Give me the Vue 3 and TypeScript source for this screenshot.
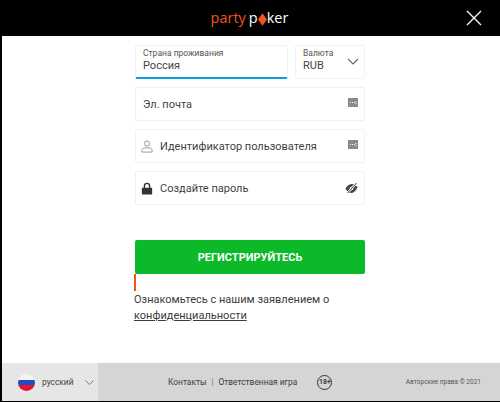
<script setup lang="ts">
const fields = [
  { label: 'Эл. почта', icon: '', end: 'dots' },
  { label: 'Идентификатор пользователя', icon: 'user', end: 'dots' },
  { label: 'Создайте пароль', icon: 'lock', end: 'eye' }
]
</script>

<template>
  <div class="frame">
    <header class="top">
      <div class="logo">
        <span class="party">party</span>
        <span class="poker">p<svg class="diamond" width="9" height="13" viewBox="0 0 10 14"><path d="M5 0 L10 7 L5 14 L0 7 Z" fill="#f1541e" /></svg>ker</span>
      </div>
      <button class="close" aria-label="close">
        <svg width="16" height="16" viewBox="0 0 16 16"><path d="M1 1 L15 15 M15 1 L1 15" stroke="#fff" stroke-width="1.3" fill="none" /></svg>
      </button>
    </header>

    <main class="content">
      <form class="form" @submit.prevent>
        <div class="row">
          <div class="box country">
            <span class="small">Страна проживания</span>
            <span class="value">Россия</span>
          </div>
          <div class="box currency">
            <span class="small">Валюта</span>
            <span class="value">RUB</span>
            <svg class="chev" width="12" height="7" viewBox="0 0 12 7"><path d="M1 1 L6 6 L11 1" stroke="#666" stroke-width="1.1" fill="none" /></svg>
          </div>
        </div>

        <div v-for="f in fields" :key="f.label" class="box field">
          <svg v-if="f.icon === 'user'" class="lead" width="12" height="13" viewBox="0 0 14 15">
            <circle cx="7" cy="4" r="3" fill="none" stroke="#8b8b8b" />
            <path d="M1 14 V12 C1 10 3 9 7 9 C11 9 13 10 13 12 V14 Z" fill="none" stroke="#8b8b8b" />
          </svg>
          <svg v-if="f.icon === 'lock'" class="lead" width="12" height="13" viewBox="0 0 14 15">
            <path d="M4 7 V4.500 C4 2.500 5.300 1.500 7 1.500 C8.700 1.500 10 2.500 10 4.500 V7" fill="none" stroke="#333" stroke-width="1.600" />
            <rect x="1" y="6.500" width="12" height="8" rx="0.500" fill="#333" />
          </svg>
          <span class="label" :class="{ first: !f.icon }">{{ f.label }}</span>
          <svg v-if="f.end === 'dots'" class="end dots" width="10" height="9" viewBox="0 0 10 9">
            <rect width="10" height="9" fill="#8a8a8a" />
            <path d="M2 4.500 H7 M8 3 V6" stroke="#fff" stroke-dasharray="1 1" />
          </svg>
          <svg v-else class="end" width="13" height="12" viewBox="0 0 13 12">
            <path d="M0.500 6.500 C2.500 3 5 2 7 2 C9 2 11 3 12.500 5 C11 9 8.500 11 6 11 C4 11 2 9.500 0.500 6.500 Z" fill="#444" />
            <circle cx="6.500" cy="6.500" r="1.800" fill="#fff" />
            <path d="M2.500 11 L11 1.500" stroke="#fff" stroke-width="2.200" />
            <path d="M2.500 11 L11.500 1" stroke="#444" stroke-width="1" />
          </svg>
        </div>

        <button class="submit">РЕГИСТРИРУЙТЕСЬ</button>
        <div class="marker"></div>
        <p class="note">Ознакомьтесь с нашим заявлением о <a class="link">конфиденциальности</a></p>
      </form>
    </main>

    <footer class="bottom">
      <div class="lang">
        <span class="flag"></span>
        <span class="lang-name">русский</span>
        <svg width="9" height="5" viewBox="0 0 11 6"><path d="M0.500 0.500 L5.500 5.500 L10.500 0.500" stroke="#666" fill="none" /></svg>
      </div>
      <div class="links">
        <span>Контакты</span>
        <span class="sep">|</span>
        <span>Ответственная игра</span>
        <span class="age">18+</span>
      </div>
      <span class="copy">Авторские права © 2021</span>
    </footer>
  </div>
</template>

<style>
html, body {
  margin: 0;
  background: #000;
}
</style>

<style scoped>
.frame {
  width: 498px;
  height: 401px;
  margin-left: 2px;
  display: flex;
  flex-direction: column;
  background: #fff;
  font-family: Roboto, "Liberation Sans", sans-serif;
  color: #3c3c3c;
}

.top {
  height: 36px;
  flex: none;
  box-sizing: border-box;
  padding-right: 3px;
  background: #000;
  display: flex;
  align-items: center;
  justify-content: center;
  position: relative;
}

.logo {
  display: flex;
  gap: 3px;
  font-family: "Open Sans", sans-serif;
  font-size: 14.5px;
  line-height: 22px;
}

.party {
  color: #f1541e;
}

.poker {
  color: #fff;
  display: flex;
  align-items: center;
}

.diamond {
  margin-top: 2px;
}

.close {
  position: absolute;
  right: 18px;
  top: 10px;
  padding: 0;
  border: 0;
  background: none;
  display: flex;
}

.content {
  flex: 1;
  box-sizing: border-box;
  padding: 9px 2px 0 0;
  display: flex;
  justify-content: center;
}

.form {
  width: 230px;
  display: flex;
  flex-direction: column;
  gap: 8px;
}

.row {
  display: flex;
  gap: 7px;
}

.box {
  box-sizing: border-box;
  height: 34px;
  border: 1px solid #f1f1f1;
  border-radius: 2px;
}

.country,
.currency {
  display: flex;
  flex-direction: column;
  padding: 1px 0 0 7px;
  position: relative;
}

.country {
  width: 153px;
  border-bottom: 2px solid #0a9fe3;
}

.currency {
  width: 70px;
}

.small {
  font-size: 8.5px;
  line-height: 12px;
  color: #555;
}

.value {
  font-size: 11px;
  line-height: 14px;
  color: #444;
}

.chev {
  position: absolute;
  right: 5px;
  top: 12px;
}

.field {
  display: flex;
  align-items: center;
  padding: 0 6px 0 5px;
  gap: 7px;
}

.label {
  font-size: 11px;
  flex: 1;
  color: #3f3f3f;
}

.label.first {
  margin-left: 2px;
}

.dots {
  margin-top: -3px;
}

.submit {
  height: 34px;
  margin-top: 27px;
  border: 0;
  border-radius: 2px;
  background: #0cb928;
  color: #fff;
  font-family: Roboto, sans-serif;
  font-size: 11px;
  font-weight: 700;
}

.marker {
  width: 2px;
  height: 17px;
  margin: -8px 0 0 -1px;
  background: #f1541e;
}

.note {
  margin: -7px 0 0 -1px;
  font-size: 11px;
  line-height: 16px;
  color: #3c3c3c;
}

.link {
  text-decoration: underline;
}

.bottom {
  height: 38px;
  flex: none;
  display: flex;
  align-items: center;
  background: #d5d5d5;
  font-size: 8.4px;
}

.lang {
  width: 96px;
  height: 100%;
  box-sizing: border-box;
  padding-left: 16px;
  display: flex;
  align-items: center;
  gap: 7px;
  background: #e6e6e6;
}

.flag {
  width: 17px;
  height: 17px;
  border-radius: 50%;
  background: linear-gradient(#f4f4f4 0 33%, #1f4bc4 33% 66%, #e5122a 66%);
}

.lang-name {
  margin-right: 4px;
  color: #444;
}

.links {
  display: flex;
  align-items: center;
  margin-left: 70px;
  gap: 5px;
}

.sep {
  color: #777;
}

.age {
  margin-left: 15px;
  box-sizing: border-box;
  width: 15px;
  height: 15px;
  border: 1.5px solid #333;
  border-radius: 50%;
  font-size: 7px;
  font-weight: 700;
  display: flex;
  align-items: center;
  justify-content: center;
}

.copy {
  margin-left: auto;
  margin-right: 19px;
  font-size: 6.5px;
  color: #555;
}
</style>
